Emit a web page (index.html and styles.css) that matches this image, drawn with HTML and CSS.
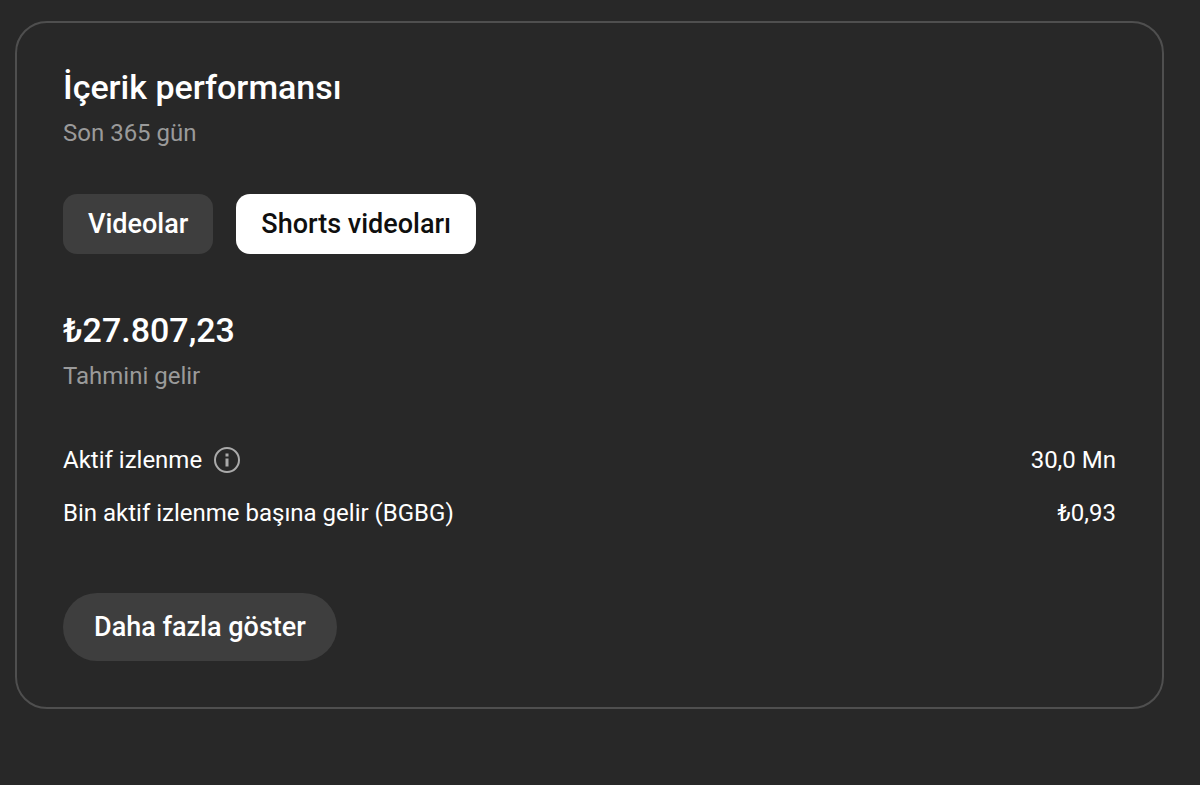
FILE: index.html
```html
<!DOCTYPE html>
<html lang="tr">
<head>
    <meta charset="UTF-8">
    <title>İçerik performansı</title>
    <link rel="stylesheet" href="styles.css">
</head>
<body>

<section class="card">
    <h1 class="title">İçerik performansı</h1>
    <p class="caption">Son 365 gün</p>

    <div class="tabs">
        <button type="button" class="tab">Videolar</button>
        <button type="button" class="tab active">Shorts videoları</button>
    </div>

    <p class="amount">₺27.807,23</p>
    <p class="caption">Tahmini gelir</p>

    <dl class="stats">
        <div class="stat">
            <dt>
                Aktif izlenme
                <svg class="info" viewBox="0 0 26 26" aria-hidden="true">
                    <circle cx="13" cy="13" r="12" fill="none" stroke="currentColor" stroke-width="2"/>
                    <rect x="11.5" y="6.5" width="3" height="3" fill="currentColor"/>
                    <rect x="11.5" y="11.5" width="3" height="8" fill="currentColor"/>
                </svg>
            </dt>
            <dd>30,0 Mn</dd>
        </div>
        <div class="stat">
            <dt>Bin aktif izlenme başına gelir (BGBG)</dt>
            <dd>₺0,93</dd>
        </div>
    </dl>

    <button type="button" class="more">Daha fazla göster</button>
</section>

</body>
</html>
```

FILE: styles.css
```css
* {
    margin: 0;
    padding: 0;
    box-sizing: border-box;
}

body {
    background-color: #282828;
    color: #fff;
    font-family: Roboto, "Liberation Sans", sans-serif;
    font-size: 24px;
    line-height: 32px;
    padding: 21px 36px 21px 15px;
}

.card {
    border: 2px solid #4f4f4f;
    border-radius: 32px;
    padding: 44px 46px 46px;
}

.title, .amount {
    font-size: 34px;
    line-height: 40px;
    font-weight: 500;
}

.caption {
    color: #9a9a9a;
    margin-top: 10px;
}

.tabs {
    display: flex;
    gap: 23px;
    margin: 45px 0 56px;
}

button {
    border: none;
    background-color: #3e3e3e;
    color: #fff;
    font-family: inherit;
    font-size: 27px;
    line-height: 36px;
    font-weight: 500;
    cursor: pointer;
}

.tab {
    padding: 12px 25px;
    border-radius: 14px;
}

.tab.active {
    background-color: #fff;
    color: #0f0f0f;
}

.stats {
    margin: 52px 0 64px;
}

.stat {
    display: flex;
    justify-content: space-between;
}

.stat + .stat {
    margin-top: 21px;
}

.stat dt {
    display: flex;
    align-items: center;
    gap: 12px;
}

.info {
    width: 26px;
    height: 26px;
    color: #aaa;
}

.more {
    padding: 16px 31px;
    border-radius: 34px;
}
```
